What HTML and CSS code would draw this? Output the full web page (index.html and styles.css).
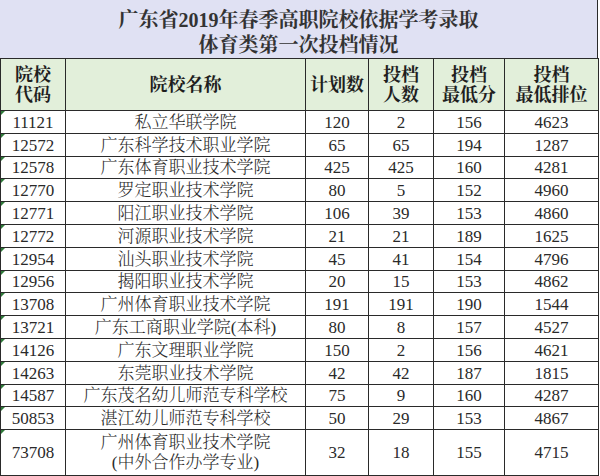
FILE: index.html
```html
<!DOCTYPE html>
<html lang="zh-CN">
<head>
<meta charset="utf-8">
<title>广东省2019年春季高职院校依据学考录取体育类第一次投档情况</title>
<link rel="stylesheet" href="styles.css">
</head>
<body>
<div class="sheet">
  <div class="title">
    <div>广东省2019年春季高职院校依据学考录取</div>
    <div>体育类第一次投档情况</div>
  </div>
  <table class="grid">
    <colgroup>
      <col class="c-code"><col class="c-name"><col class="c-plan"><col class="c-num"><col class="c-score"><col class="c-rank">
    </colgroup>
    <thead>
      <tr>
        <th>院校<br>代码</th>
        <th>院校名称</th>
        <th>计划数</th>
        <th>投档<br>人数</th>
        <th>投档<br>最低分</th>
        <th>投档<br>最低排位</th>
      </tr>
    </thead>
    <tbody>
      <tr><td class="code">11121</td><td>私立华联学院</td><td>120</td><td>2</td><td>156</td><td>4623</td></tr>
      <tr><td class="code">12572</td><td>广东科学技术职业学院</td><td>65</td><td>65</td><td>194</td><td>1287</td></tr>
      <tr><td class="code">12578</td><td>广东体育职业技术学院</td><td>425</td><td>425</td><td>160</td><td>4281</td></tr>
      <tr><td class="code">12770</td><td>罗定职业技术学院</td><td>80</td><td>5</td><td>152</td><td>4960</td></tr>
      <tr><td class="code">12771</td><td>阳江职业技术学院</td><td>106</td><td>39</td><td>153</td><td>4860</td></tr>
      <tr><td class="code">12772</td><td>河源职业技术学院</td><td>21</td><td>21</td><td>189</td><td>1625</td></tr>
      <tr><td class="code">12954</td><td>汕头职业技术学院</td><td>45</td><td>41</td><td>154</td><td>4796</td></tr>
      <tr><td class="code">12956</td><td>揭阳职业技术学院</td><td>20</td><td>15</td><td>153</td><td>4862</td></tr>
      <tr><td class="code">13708</td><td>广州体育职业技术学院</td><td>191</td><td>191</td><td>190</td><td>1544</td></tr>
      <tr><td class="code">13721</td><td>广东工商职业学院(本科)</td><td>80</td><td>8</td><td>157</td><td>4527</td></tr>
      <tr><td class="code">14126</td><td>广东文理职业学院</td><td>150</td><td>2</td><td>156</td><td>4621</td></tr>
      <tr><td class="code">14263</td><td>东莞职业技术学院</td><td>42</td><td>42</td><td>187</td><td>1815</td></tr>
      <tr><td class="code">14587</td><td>广东茂名幼儿师范专科学校</td><td>75</td><td>9</td><td>160</td><td>4287</td></tr>
      <tr><td class="code">50853</td><td>湛江幼儿师范专科学校</td><td>50</td><td>29</td><td>153</td><td>4867</td></tr>
      <tr class="tall"><td class="code">73708</td><td>广州体育职业技术学院<br>(中外合作办学专业)</td><td>32</td><td>18</td><td>155</td><td>4715</td></tr>
    </tbody>
  </table>
</div>
</body>
</html>
```

FILE: styles.css
```css
html, body {
  margin: 0;
  padding: 0;
  background: #ffffff;
}

.sheet {
  width: 598px;
  font-family: "Liberation Serif", "Noto Serif CJK SC", "Noto Sans CJK SC", serif;
  color: #2a2a2a;
}

.title {
  box-sizing: border-box;
  height: 58px;
  padding-top: 8px;
  background: #e0e1f3;
  border-right: 1px solid #2a2a2a;
  text-align: center;
  font-size: 20px;
  line-height: 25px;
  font-weight: 700;
  color: #333333;
}

.grid {
  width: 598px;
  border-collapse: collapse;
  table-layout: fixed;
}

.c-code { width: 65px; }
.c-name { width: 240px; }
.c-plan { width: 63px; }
.c-num { width: 65px; }
.c-score { width: 71px; }
.c-rank { width: 94px; }

.grid th,
.grid td {
  border: 1px solid #2a2a2a;
  padding: 0;
  text-align: center;
  vertical-align: middle;
}

.grid thead tr {
  height: 52px;
}

.grid th {
  background: #e2efda;
  font-size: 18px;
  line-height: 20px;
  font-weight: 700;
  color: #1e1e1e;
}

.grid tbody tr {
  height: 22.8px;
}

.grid tbody tr.tall {
  height: 45.6px;
}

.grid td {
  font-size: 17px;
  line-height: 16px;
  font-weight: 300;
  padding-top: 2px;
}

.grid tr.tall td {
  line-height: 20px;
}

.grid td.code {
  position: relative;
}

.grid td.code::before {
  content: "";
  position: absolute;
  left: 0;
  top: 0;
  width: 0;
  height: 0;
  border-top: 4px solid #2f7a3a;
  border-right: 4px solid transparent;
}
```
